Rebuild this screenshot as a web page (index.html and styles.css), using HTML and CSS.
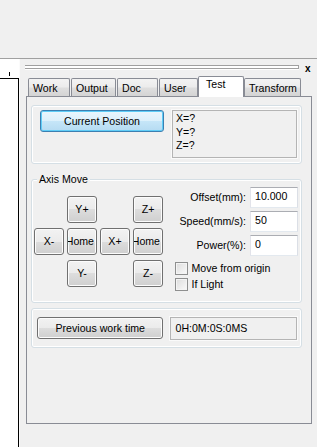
FILE: index.html
```html
<!DOCTYPE html>
<html>
<head>
<meta charset="utf-8">
<title>Test panel</title>
<link rel="stylesheet" href="styles.css">
</head>
<body>
<div class="app">
  <div class="topspace"></div>
  <div class="main">
    <div class="left">
      <div class="ruler"><span class="tick"></span></div>
      <div class="canvas"></div>
    </div>
    <div class="dock">
      <div class="dockhead">
        <div class="grip"></div>
        <span class="close">x</span>
      </div>
      <div class="tabs">
        <div class="tab w-work">Work</div>
        <div class="tab w-output">Output</div>
        <div class="tab w-doc">Doc</div>
        <div class="tab w-user">User</div>
        <div class="tab active w-test">Test</div>
        <div class="tab w-transform">Transform</div>
      </div>
      <div class="pane">
        <div class="group g1">
          <button class="btn btn-default btn-pos">Current Position</button>
          <div class="readout">X=?<br>Y=?<br>Z=?</div>
        </div>
        <div class="group g2">
          <span class="legend">Axis Move</span>
          <div class="g2body">
            <div class="pad">
              <button class="btn pb c2 r1">Y+</button>
              <button class="btn pb c4 r1">Z+</button>
              <button class="btn pb c1 r2">X-</button>
              <button class="btn pb c2 r2 clip"><span class="clipin">Home</span></button>
              <button class="btn pb c3 r2">X+</button>
              <button class="btn pb c4 r2 clip"><span class="clipin">Home</span></button>
              <button class="btn pb c2 r3">Y-</button>
              <button class="btn pb c4 r3">Z-</button>
            </div>
            <div class="params">
              <div class="fields">
                <label class="flabel">Offset(mm):</label><div class="input">10.000</div>
                <label class="flabel">Speed(mm/s):</label><div class="input">50</div>
                <label class="flabel">Power(%):</label><div class="input">0</div>
              </div>
              <div class="checks">
                <div class="check"><span class="box"></span><span>Move from origin</span></div>
                <div class="check"><span class="box"></span><span>If Light</span></div>
              </div>
            </div>
          </div>
        </div>
        <div class="group g3">
          <button class="btn btn-time">Previous work time</button>
          <div class="timebox">0H:0M:0S:0MS</div>
        </div>
      </div>
    </div>
  </div>
</div>
</body>
</html>
```
FILE: styles.css
```css
* { box-sizing: border-box; }
html, body { margin: 0; padding: 0; }
body {
  width: 317px;
  height: 447px;
  overflow: hidden;
  background: #f0f0f0;
  font-family: "Liberation Sans", Arial, sans-serif;
  font-size: 10.6px;
  line-height: 13px;
  color: #000;
}
.app { display: flex; flex-direction: column; height: 447px; }
.topspace { height: 58px; flex: none; }
.main {
  flex: 1;
  display: flex;
  border-top: 1px solid #a0a0a0;
}
.left { width: 19px; flex: none; display: flex; flex-direction: column; }
.ruler { height: 19px; background: #fff; }
.tick { display: block; width: 1px; height: 4px; background: #000; margin: 13px 0 0 9px; }
.canvas {
  flex: 1;
  background: #fff;
  border-top: 1px solid #000;
  border-right: 1px solid #000;
}
.dock {
  flex: 1;
  border-left: 1px solid #fbfbfb;
  display: flex;
  flex-direction: column;
}
.dockhead {
  height: 17px;
  display: flex;
  align-items: flex-start;
  padding: 6px 0 0 5px;
}
.grip {
  width: 274px;
  height: 4px;
  border-top: 1px solid #a0a0a0;
  border-bottom: 1px solid #a0a0a0;
  border-right: 1px solid #a0a0a0;
  background: #fff;
  box-shadow: 0 1px 0 #fff;
}
.close {
  margin: -1px 0 0 6px;
  font-weight: bold;
  font-size: 10px;
  line-height: 10px;
}
.tabs {
  height: 21px;
  display: flex;
  align-items: flex-end;
  padding-left: 8px;
  margin-bottom: -1px;
  position: relative;
  z-index: 1;
}
.tab {
  height: 18px;
  margin-bottom: 1px;
  border: 1px solid #898c95;
  border-bottom: none;
  border-radius: 2px 2px 0 0;
  background: linear-gradient(#f3f3f3 0%, #ececec 45%, #dedede 55%, #d4d4d4 100%);
  padding: 3px 0 0 4px;
  white-space: nowrap;
}
.tab.active {
  height: 21px;
  margin-bottom: 0;
  background: #fff;
  padding: 1px 0 0 7px;
}
.w-work { width: 42px; margin-right: 1px; }
.w-output { width: 45px; margin-right: 1px; }
.w-doc { width: 41px; margin-right: 1px; }
.w-user { width: 39px; }
.w-test { width: 46px; }
.w-transform { width: 57px; }
.pane {
  height: 328px;
  margin: 0 5px 0 6px;
  border: 1px solid #898c95;
  background: #f0f0f0;
  padding: 8px 0 0 4px;
}
.group {
  width: 271px;
  border: 1px solid #d5dfe5;
  border-radius: 3px;
  box-shadow: inset 0 0 0 1px #fff;
}
.btn {
  font: inherit;
  color: #000;
  margin: 0;
  padding: 0;
  border: 1px solid #707070;
  border-radius: 3px;
  background: linear-gradient(#f2f2f2 0%, #ebebeb 50%, #dddddd 50%, #cfcfcf 100%);
  box-shadow: inset 0 0 0 1px #fcfcfc;
  white-space: nowrap;
}
.btn-default {
  border-color: #3c7fb1;
  background: linear-gradient(#eaf6fd 0%, #dcf0fb 50%, #c6e6f8 50%, #b5dbf2 100%);
  box-shadow: inset 0 0 0 1px #5fcdf7;
}
.g1 {
  height: 59px;
  display: flex;
  align-items: flex-start;
  padding: 4px 4px 0 8px;
}
.btn-pos { width: 124px; height: 22px; }
.readout {
  margin-left: 8px;
  width: 125px;
  height: 48px;
  border: 1px solid #b4b4b4;
  box-shadow: 0 0 0 1px #fafafa;
  padding: 1px 0 0 3px;
  line-height: 13.5px;
}
.g2 {
  margin-top: 15px;
  height: 124px;
}
.legend {
  display: block;
  width: max-content;
  margin: -7px 0 0 5px;
  padding: 0 2px;
  background: #f0f0f0;
}
.g2body {
  display: flex;
  padding: 0 3px 0 2px;
}
.pad {
  display: grid;
  grid-template-columns: repeat(4, 30px);
  grid-template-rows: repeat(3, 27px);
  column-gap: 3px;
  row-gap: 5px;
  margin-top: 10px;
}
.pb { width: 30px; height: 27px; overflow: hidden; }
.c1 { grid-column: 1; } .c2 { grid-column: 2; } .c3 { grid-column: 3; } .c4 { grid-column: 4; }
.r1 { grid-row: 1; } .r2 { grid-row: 2; } .r3 { grid-row: 3; }
.clip { display: flex; justify-content: flex-start; align-items: center; }
.clipin {
  display: flex;
  justify-content: flex-end;
  width: 26px;
  overflow: hidden;
  white-space: nowrap;
}
.params {
  margin-left: auto;
  display: flex;
  flex-direction: column;
  padding-top: 1px;
}
.fields {
  display: grid;
  grid-template-columns: auto 48px;
  column-gap: 4px;
  row-gap: 3px;
  align-items: center;
}
.flabel { text-align: right; }
.input {
  height: 21px;
  background: #fff;
  border: 1px solid #abadb3;
  border-color: #abadb3 #dbdfe6 #e3e9ef #e2e3ea;
  padding: 2px 0 0 4px;
}
.checks { margin: 6px 0 0 -4px; display: flex; flex-direction: column; gap: 3px; }
.check { display: flex; align-items: center; gap: 3px; height: 13px; }
.box {
  width: 13px;
  height: 13px;
  border: 1px solid #8e8f8f;
  background: linear-gradient(135deg, #dcdcdc, #fafafa);
  box-shadow: inset 0 0 0 1px #f4f4f4;
}
.g3 {
  margin-top: 5px;
  height: 40px;
  display: flex;
  align-items: center;
  padding: 0 4px 0 5px;
}
.btn-time { width: 127px; height: 22px; }
.timebox {
  margin-left: 7px;
  width: 127px;
  height: 23px;
  border: 1px solid #b4b4b4;
  box-shadow: 0 0 0 1px #fafafa;
  padding: 4px 0 0 4px;
}
```
